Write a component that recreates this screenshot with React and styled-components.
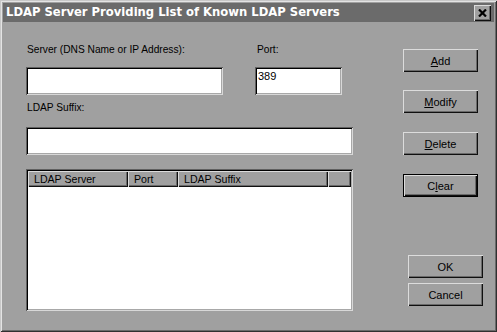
import styled, { createGlobalStyle } from "styled-components"

const GlobalStyle = createGlobalStyle`
  html, body {
    margin: 0;
    padding: 0;
    background: #a0a0a0;
  }
  body {
    font-family: "Liberation Sans", Arial, sans-serif;
    font-size: 10.2px;
    color: #000;
  }
`

const Window = styled.div`
  width: 497px;
  height: 332px;
  box-sizing: border-box;
  padding: 3px;
  background: #a0a0a0;
  display: flex;
  flex-direction: column;
  box-shadow: inset 1px 1px #c8c8c8, inset -1px -1px #303030,
    inset 2px 2px #e4e4e4, inset -2px -2px #6a6a6a;
`

const TitleBar = styled.div`
  height: 19px;
  background: #6b6b6b;
  display: flex;
  align-items: center;
  justify-content: space-between;
  padding: 0 3px 0 3px;
`

const TitleText = styled.div`
  color: #fff;
  font-family: "DejaVu Sans", Verdana, sans-serif;
  font-weight: bold;
  font-size: 11.6px;
  line-height: 19px;
  white-space: nowrap;
`

const CloseButton = styled.div`
  width: 17px;
  height: 16px;
  box-sizing: border-box;
  background: #a0a0a0;
  display: flex;
  align-items: center;
  justify-content: center;
  box-shadow: inset 1px 1px #dcdcdc, inset -1px -1px #101010,
    inset -2px -2px #6a6a6a;
`

const Body = styled.div`
  flex: 1;
  display: flex;
  align-items: flex-start;
`

const LeftPanel = styled.div`
  width: 327px;
  margin: 21px 0 0 23px;
  display: flex;
  flex-direction: column;
`

const FieldRow = styled.div`
  display: flex;
  gap: 32px;
`

const Field = styled.div`
  display: flex;
  flex-direction: column;
  width: ${(p) => p.$width}px;
`

const Label = styled.div`
  line-height: 13px;
  height: 13px;
  padding-left: ${(p) => p.$indent || 1}px;
  margin-bottom: ${(p) => p.$gap}px;
  white-space: nowrap;
`

const TextBox = styled.div`
  height: 28px;
  box-sizing: border-box;
  background: #fff;
  padding: 3px 3px;
  line-height: 13px;
  font-size: 11px;
  box-shadow: inset 1px 1px #606060, inset -1px -1px #d8d8d8,
    inset 2px 2px #000, inset -2px -2px #a8a8a8;
`

const SuffixBlock = styled.div`
  margin-top: 6px;
  display: flex;
  flex-direction: column;
`

const ListBox = styled.div`
  margin-top: 14px;
  height: 142px;
  box-sizing: border-box;
  background: #fff;
  padding: 2px;
  box-shadow: inset 1px 1px #606060, inset -1px -1px #d8d8d8,
    inset 2px 2px #000, inset -2px -2px #a8a8a8;
`

const HeaderRow = styled.div`
  display: flex;
  height: 16px;
`

const HeaderCell = styled.div`
  width: ${(p) => p.$width}px;
  flex: ${(p) => (p.$fill ? 1 : "none")};
  box-sizing: border-box;
  background: #a0a0a0;
  padding-left: 6px;
  line-height: 16px;
  font-size: 10.6px;
  white-space: nowrap;
  box-shadow: inset 1px 1px #dcdcdc, inset -1px -1px #101010,
    inset -2px -2px #6a6a6a;
`

const RightPanel = styled.div`
  margin: 27px 0 0 50px;
  display: flex;
  flex-direction: column;
`

const BottomStack = styled.div`
  display: flex;
  flex-direction: column;
  gap: 5px;
  margin: 58px 0 0 5px;
`

const Button = styled.div`
  width: 75px;
  height: 23px;
  margin-top: ${(p) => p.$top || 0}px;
  box-sizing: border-box;
  background: #a0a0a0;
  display: flex;
  align-items: center;
  justify-content: center;
  font-size: 11px;
  box-shadow: ${(p) =>
    p.$default
      ? "inset 0 0 0 1px #000, inset 2px 2px #dcdcdc, inset -2px -2px #101010, inset -3px -3px #6a6a6a"
      : "inset 1px 1px #dcdcdc, inset -1px -1px #101010, inset -2px -2px #6a6a6a"};

  u {
    text-decoration-thickness: 1px;
    text-underline-offset: 1px;
  }
`

function CloseIcon() {
  return (
    <svg width="9" height="8" viewBox="0 0 9 8">
      <path d="M1 0.5 L8 7.5 M8 0.5 L1 7.5" stroke="#000" strokeWidth="2.2" />
    </svg>
  )
}

export default function App() {
  return (
    <>
      <GlobalStyle />
      <Window>
        <TitleBar>
          <TitleText>LDAP Server Providing List of Known LDAP Servers</TitleText>
          <CloseButton>
            <CloseIcon />
          </CloseButton>
        </TitleBar>
        <Body>
          <LeftPanel>
            <FieldRow>
              <Field $width={197}>
                <Label $gap={11}>Server (DNS Name or IP Address):</Label>
                <TextBox />
              </Field>
              <Field $width={87}>
                <Label $gap={11} $indent={2}>Port:</Label>
                <TextBox>389</TextBox>
              </Field>
            </FieldRow>
            <SuffixBlock>
              <Label $gap={13}>LDAP Suffix:</Label>
              <TextBox />
            </SuffixBlock>
            <ListBox>
              <HeaderRow>
                <HeaderCell $width={100}>LDAP Server</HeaderCell>
                <HeaderCell $width={50}>Port</HeaderCell>
                <HeaderCell $width={150}>LDAP Suffix</HeaderCell>
                <HeaderCell $fill />
              </HeaderRow>
            </ListBox>
          </LeftPanel>
          <RightPanel>
            <Button><span><u>A</u>dd</span></Button>
            <Button $top={18}><span><u>M</u>odify</span></Button>
            <Button $top={19}><span><u>D</u>elete</span></Button>
            <Button $top={19} $default><span>C<u>l</u>ear</span></Button>
            <BottomStack>
              <Button>OK</Button>
              <Button>Cancel</Button>
            </BottomStack>
          </RightPanel>
        </Body>
      </Window>
    </>
  )
}
